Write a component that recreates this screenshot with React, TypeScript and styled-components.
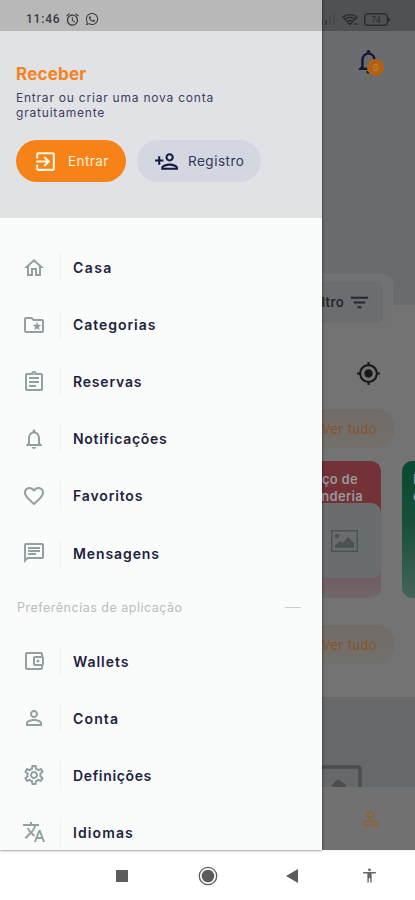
import React from "react";
import styled, { createGlobalStyle } from "styled-components";
import type { IconType } from "react-icons";
import {
  MdOutlineHome, MdOutlineFolderSpecial, MdOutlineAssignment, MdNotificationsNone,
  MdFavoriteBorder, MdOutlineChat, MdOutlineAccountBalanceWallet, MdPersonOutline,
  MdOutlineSettings, MdTranslate, MdExitToApp, MdOutlinePersonAdd, MdFilterList,
  MdMyLocation, MdAccessibility, MdAlarm,
} from "react-icons/md";
import { FaWhatsapp } from "react-icons/fa";

const Global = createGlobalStyle`
  * { box-sizing: border-box; }
  body { margin: 0; font-family: Inter, "Liberation Sans", sans-serif; }
  svg { display: block; flex: none; }
`;

const Screen = styled.div`
  position: relative;
  width: 415px;
  height: 900px;
  overflow: hidden;
  background: #fff;
  display: flex;
  flex-direction: column;
`;

const Text = styled.span<{ $ls?: number }>`
  letter-spacing: ${(p) => p.$ls ?? 0}px;
  white-space: nowrap;
`;

/* Dimmed home page behind the drawer */
const Page = styled.main`
  height: 850px;
  background: #737373;
  display: flex;
  flex-direction: column;
  overflow: hidden;
`;
const PageStatus = styled.div`
  height: 31px;
  flex: none;
  background: #505152;
  color: #2b2c2d;
  display: flex;
  justify-content: flex-end;
  align-items: center;
  gap: 6px;
  padding: 7px 24px 0 0;
`;
const Hero = styled.section`
  height: 274px;
  flex: none;
  background: #6a6b6e;
  padding: 16px 31px 0 0;
  display: flex;
  flex-direction: column;
  align-items: flex-end;
`;
const BellWrap = styled.div`
  position: relative;
  width: 30px;
  height: 30px;
  color: #171735;
`;
const Badge = styled.span`
  position: absolute;
  left: 13px;
  top: 12px;
  width: 17px;
  height: 17px;
  border-radius: 50%;
  background: #b06212;
  color: #cb8a4a;
  font-size: 9px;
  line-height: 17px;
  text-align: center;
`;
const SearchCard = styled.div`
  width: 371px;
  height: 56px;
  margin: -31px 0 0 22px;
  flex: none;
  border-radius: 10px;
  background: #717273;
  border: 1px solid #747576;
  padding: 6px 9px;
  display: flex;
  justify-content: flex-end;
`;
const FilterButton = styled.div`
  height: 42px;
  width: 98px;
  border-radius: 7px;
  background: #6b6d70;
  color: #25272b;
  display: flex;
  align-items: center;
  justify-content: flex-end;
  gap: 4px;
  padding-right: 12px;
  font-size: 13px;
  font-weight: 600;
`;
const LocationRow = styled.div`
  height: 79px;
  flex: none;
  padding: 31px 34px 0 0;
  display: flex;
  justify-content: flex-end;
  color: #171717;
`;
const SectionTop = styled.div<{ $h: number; $top?: number }>`
  height: ${(p) => p.$h}px;
  flex: none;
  display: flex;
  justify-content: flex-end;
  align-items: flex-start;
  padding: ${(p) => p.$top ?? 0}px 20px 0 0;
`;
const SeeAll = styled.div`
  height: 39px;
  width: 92px;
  border-radius: 19px;
  background: linear-gradient(#716c67, #736f6a);
  color: #885329;
  font-size: 13px;
  display: flex;
  align-items: center;
  justify-content: flex-end;
  padding-right: 18px;
`;
const Carousel = styled.div`
  display: flex;
  gap: 21px;
  height: 137px;
  flex: none;
  padding-left: 241px;
`;
const ServiceCard = styled.article<{ $tone: "red" | "green" }>`
  width: 140px;
  height: 137px;
  flex: none;
  overflow: hidden;
  border-radius: 10px;
  background: ${(p) => p.$tone === "red"
    ? "linear-gradient(#733138 0, #733238 30%, #716064 90%, #716769)"
    : "linear-gradient(#0a492f, #184f3a 45%, #456459)"};
  color: #999;
  font-size: 13px;
  line-height: 17px;
  font-weight: 600;
  display: flex;
  flex-direction: column;
  justify-content: space-between;
`;
const CardTitle = styled.div<{ $right?: boolean }>`
  height: 42px;
  padding: ${(p) => (p.$right ? "10px 18px 0 0" : "10px 0 0 11px")};
  display: flex;
  flex-direction: column;
  align-items: ${(p) => (p.$right ? "flex-end" : "flex-start")};
`;
const ServiceLine = styled(Text)`
  margin-right: 5px;
`;
const CardImage = styled.div`
  height: 75px;
  margin-bottom: 20px;
  border-radius: 8px 10px 8px 8px;
  background: #6a6d6f;
  display: flex;
  align-items: center;
  justify-content: flex-end;
  padding-right: 23px;
`;
const LargeImage = styled.div`
  flex: 1;
  background: #66696b;
  display: flex;
  align-items: flex-end;
  padding-left: 262px;
`;
const TabBar = styled.div`
  height: 63px;
  flex: none;
  background: #727171;
  display: flex;
  justify-content: flex-end;
  align-items: center;
  padding-right: 33px;
  color: #8d6536;
`;

/* Navigation drawer */
const Drawer = styled.aside`
  position: absolute;
  left: 0;
  top: 0;
  width: 322px;
  height: 850px;
  overflow: hidden;
  background: #fafbfb;
  box-shadow: 0 0 3px rgba(0, 0, 0, 0.6);
  display: flex;
  flex-direction: column;
`;
const Status = styled.div`
  height: 31px;
  flex: none;
  background: #b8b8b8;
  display: flex;
  align-items: center;
  gap: 5px;
  padding: 7px 0 0 26px;
  color: #3c3c3c;
  font: 500 12px Roboto, sans-serif;
`;
const Header = styled.header`
  height: 187px;
  flex: none;
  background: #e1e2e6;
  padding: 34px 16px 0;
  margin-bottom: 21px;
`;
const Title = styled.h1`
  margin: 0;
  height: 20px;
  color: #f58320;
  font-size: 17px;
  line-height: 19px;
  font-weight: 700;
`;
const Intro = styled.p`
  margin: 5px 0 0;
  height: 32px;
  color: #3c4063;
  font-size: 12px;
  line-height: 15px;
  display: flex;
  flex-direction: column;
`;
const Buttons = styled.div`
  display: flex;
  gap: 11px;
  margin-top: 18px;
`;
const PillButton = styled.button<{ $primary?: boolean }>`
  border: 0;
  height: 42px;
  width: ${(p) => (p.$primary ? 110 : 124)}px;
  padding: 0 0 0 17px;
  border-radius: 22px;
  background: ${(p) => (p.$primary ? "#f78318" : "#d4d7e0")};
  color: ${(p) => (p.$primary ? "#fff1dc" : "#34385d")};
  font: 400 13.5px Inter, sans-serif;
  display: flex;
  align-items: center;
  gap: ${(p) => (p.$primary ? 10 : 9)}px;
  svg { color: ${(p) => (p.$primary ? "#fff6e4" : "#181943")}; }
`;
const Item = styled.a`
  height: 57.1px;
  flex: none;
  display: flex;
  align-items: center;
  padding-left: 22px;
  color: #1f1f40;
  font-size: 14px;
  font-weight: 600;
  svg { color: #949fa2; }
`;
const Divider = styled.i`
  width: 1px;
  height: 29px;
  margin: 0 12px 0 14px;
  background: #f0f1f2;
`;
const Group = styled.div`
  height: 51px;
  flex: none;
  display: flex;
  align-items: center;
  justify-content: space-between;
  padding: 0 21px 0 17px;
  color: #b9bcbd;
  font-size: 12.5px;
`;
const Dash = styled.i`
  width: 16px;
  height: 1px;
  background: #c9cccc;
`;

const SystemBar = styled.nav`
  height: 50px;
  background: #fff;
  border-top: 1px solid #f4f4f4;
  display: grid;
  grid-template-columns: 122px 86px 84px 77px;
  align-items: center;
  color: #666;
`;
const SystemKey = styled.div`
  justify-self: end;
  width: 24px;
  margin-right: -12px;
  display: flex;
  justify-content: center;
`;

type Entry = { label: string; icon: IconType; ls: number };
const main: Entry[] = [
  { label: "Casa", icon: MdOutlineHome, ls: 1.4 },
  { label: "Categorias", icon: MdOutlineFolderSpecial, ls: 0.95 },
  { label: "Reservas", icon: MdOutlineAssignment, ls: 0.8 },
  { label: "Notificações", icon: MdNotificationsNone, ls: 0.7 },
  { label: "Favoritos", icon: MdFavoriteBorder, ls: 0.85 },
  { label: "Mensagens", icon: MdOutlineChat, ls: 0.9 },
];
const prefs: Entry[] = [
  { label: "Wallets", icon: MdOutlineAccountBalanceWallet, ls: 0.95 },
  { label: "Conta", icon: MdPersonOutline, ls: 1.15 },
  { label: "Definições", icon: MdOutlineSettings, ls: 0.65 },
  { label: "Idiomas", icon: MdTranslate, ls: 1.1 },
];

const MenuItem = ({ label, icon: Icon, ls }: Entry) => (
  <Item>
    <Icon size={24} />
    <Divider />
    <Text $ls={ls}>{label}</Text>
  </Item>
);

const Signal = () => (
  <svg width="16" height="12" fill="#38393a">
    <path d="M1 9h2v3H1zM5 7h2v5H5z" />
    <path d="M9 4h2v8H9zM13 1h2v11h-2z" fill="#47484a" />
  </svg>
);
const Wifi = () => (
  <svg width="16" height="13" viewBox="0 0 16 13" fill="none" stroke="#2c2d2e" strokeWidth="1.4">
    <path d="M1 4Q8-1 15 4L8 11.5zM3 6Q8 2.5 13 6M5.5 8.4Q8 6.5 10.5 8.4" />
    <path d="M12 11h3" />
  </svg>
);
const Battery = () => (
  <svg width="27" height="13" viewBox="0 0 27 13">
    <rect x=".7" y=".7" width="22.6" height="11.6" rx="3" fill="none" stroke="#2c2d2e" strokeWidth="1.4" />
    <path d="M24 4l2.5 2.5L24 9z" fill="#2c2d2e" />
    <text x="12" y="9.5" textAnchor="middle" fontSize="8.5" fontFamily="Roboto" fill="#2c2d2e">74</text>
  </svg>
);
const Picture = () => (
  <svg width="27" height="22" viewBox="0 0 27 22">
    <rect x=".75" y=".75" width="25.5" height="20.5" fill="none" stroke="#4a4e50" strokeWidth="1.3" />
    <circle cx="6" cy="6" r="2.3" fill="#4d5153" />
    <path d="M4 18v-3l5-4 3 2 5-6 6 6v5z" fill="#4d5153" />
  </svg>
);
const LargePicture = () => (
  <svg width="100" height="22" viewBox="0 0 100 22">
    <path d="M2 22V4Q2 2 4 2H96Q98 2 98 4V22" fill="none" stroke="#4b4d4e" strokeWidth="3.5" />
    <path d="M70 22v-2l6-6 8 6v2z" fill="#4b4d4e" />
  </svg>
);

export default function App() {
  return (
    <Screen>
      <Global />
      <Page>
        <PageStatus><Signal /><Wifi /><Battery /></PageStatus>
        <Hero>
          <BellWrap>
            <MdNotificationsNone size={29} />
            <Badge>0</Badge>
          </BellWrap>
        </Hero>
        <SearchCard>
          <FilterButton><Text $ls={0.4}>Filtro</Text><MdFilterList size={23} /></FilterButton>
        </SearchCard>
        <LocationRow><MdMyLocation size={25} /></LocationRow>
        <SectionTop $h={52}><SeeAll><Text $ls={0.4}>Ver tudo</Text></SeeAll></SectionTop>
        <Carousel>
          <ServiceCard $tone="red">
            <CardTitle $right><ServiceLine $ls={0.3}>Serviço de</ServiceLine><Text $ls={0.3}>lavanderia</Text></CardTitle>
            <CardImage><Picture /></CardImage>
          </ServiceCard>
          <ServiceCard $tone="green">
            <CardTitle><Text>L</Text><Text>d</Text></CardTitle>
          </ServiceCard>
        </Carousel>
        <SectionTop $h={99} $top={27}><SeeAll><Text $ls={0.4}>Ver tudo</Text></SeeAll></SectionTop>
        <LargeImage><LargePicture /></LargeImage>
        <TabBar><MdPersonOutline size={23} /></TabBar>
      </Page>
      <Drawer>
        <Status><Text $ls={0.8}>11:46</Text><MdAlarm size={15} /><FaWhatsapp size={14} /></Status>
        <Header>
          <Title><Text $ls={0.2}>Receber</Text></Title>
          <Intro><Text $ls={0.78}>Entrar ou criar uma nova conta</Text><Text $ls={0.8}>gratuitamente</Text></Intro>
          <Buttons>
            <PillButton $primary><MdExitToApp size={25} /><Text $ls={0.4}>Entrar</Text></PillButton>
            <PillButton><MdOutlinePersonAdd size={25} /><Text $ls={0.5}>Registro</Text></PillButton>
          </Buttons>
        </Header>
        {main.map((e) => <MenuItem key={e.label} {...e} />)}
        <Group><Text $ls={0.5}>Preferências de aplicação</Text><Dash /></Group>
        {prefs.map((e) => <MenuItem key={e.label} {...e} />)}
      </Drawer>
      <SystemBar>
        <SystemKey><svg width="12" height="12"><path d="M0 0h12v12H0z" fill="#5c5c5c" /></svg></SystemKey>
        <SystemKey>
          <svg width="20" height="20">
            <circle cx="10" cy="10" r="8.7" fill="none" stroke="#5c5c5c" strokeWidth="1.3" />
            <circle cx="10" cy="10" r="6.3" fill="#5c5c5c" />
          </svg>
        </SystemKey>
        <SystemKey><svg width="12" height="14"><path d="M0 7L12 0V14Z" fill="#5c5c5c" /></svg></SystemKey>
        <SystemKey><MdAccessibility size={17} /></SystemKey>
      </SystemBar>
    </Screen>
  );
}
